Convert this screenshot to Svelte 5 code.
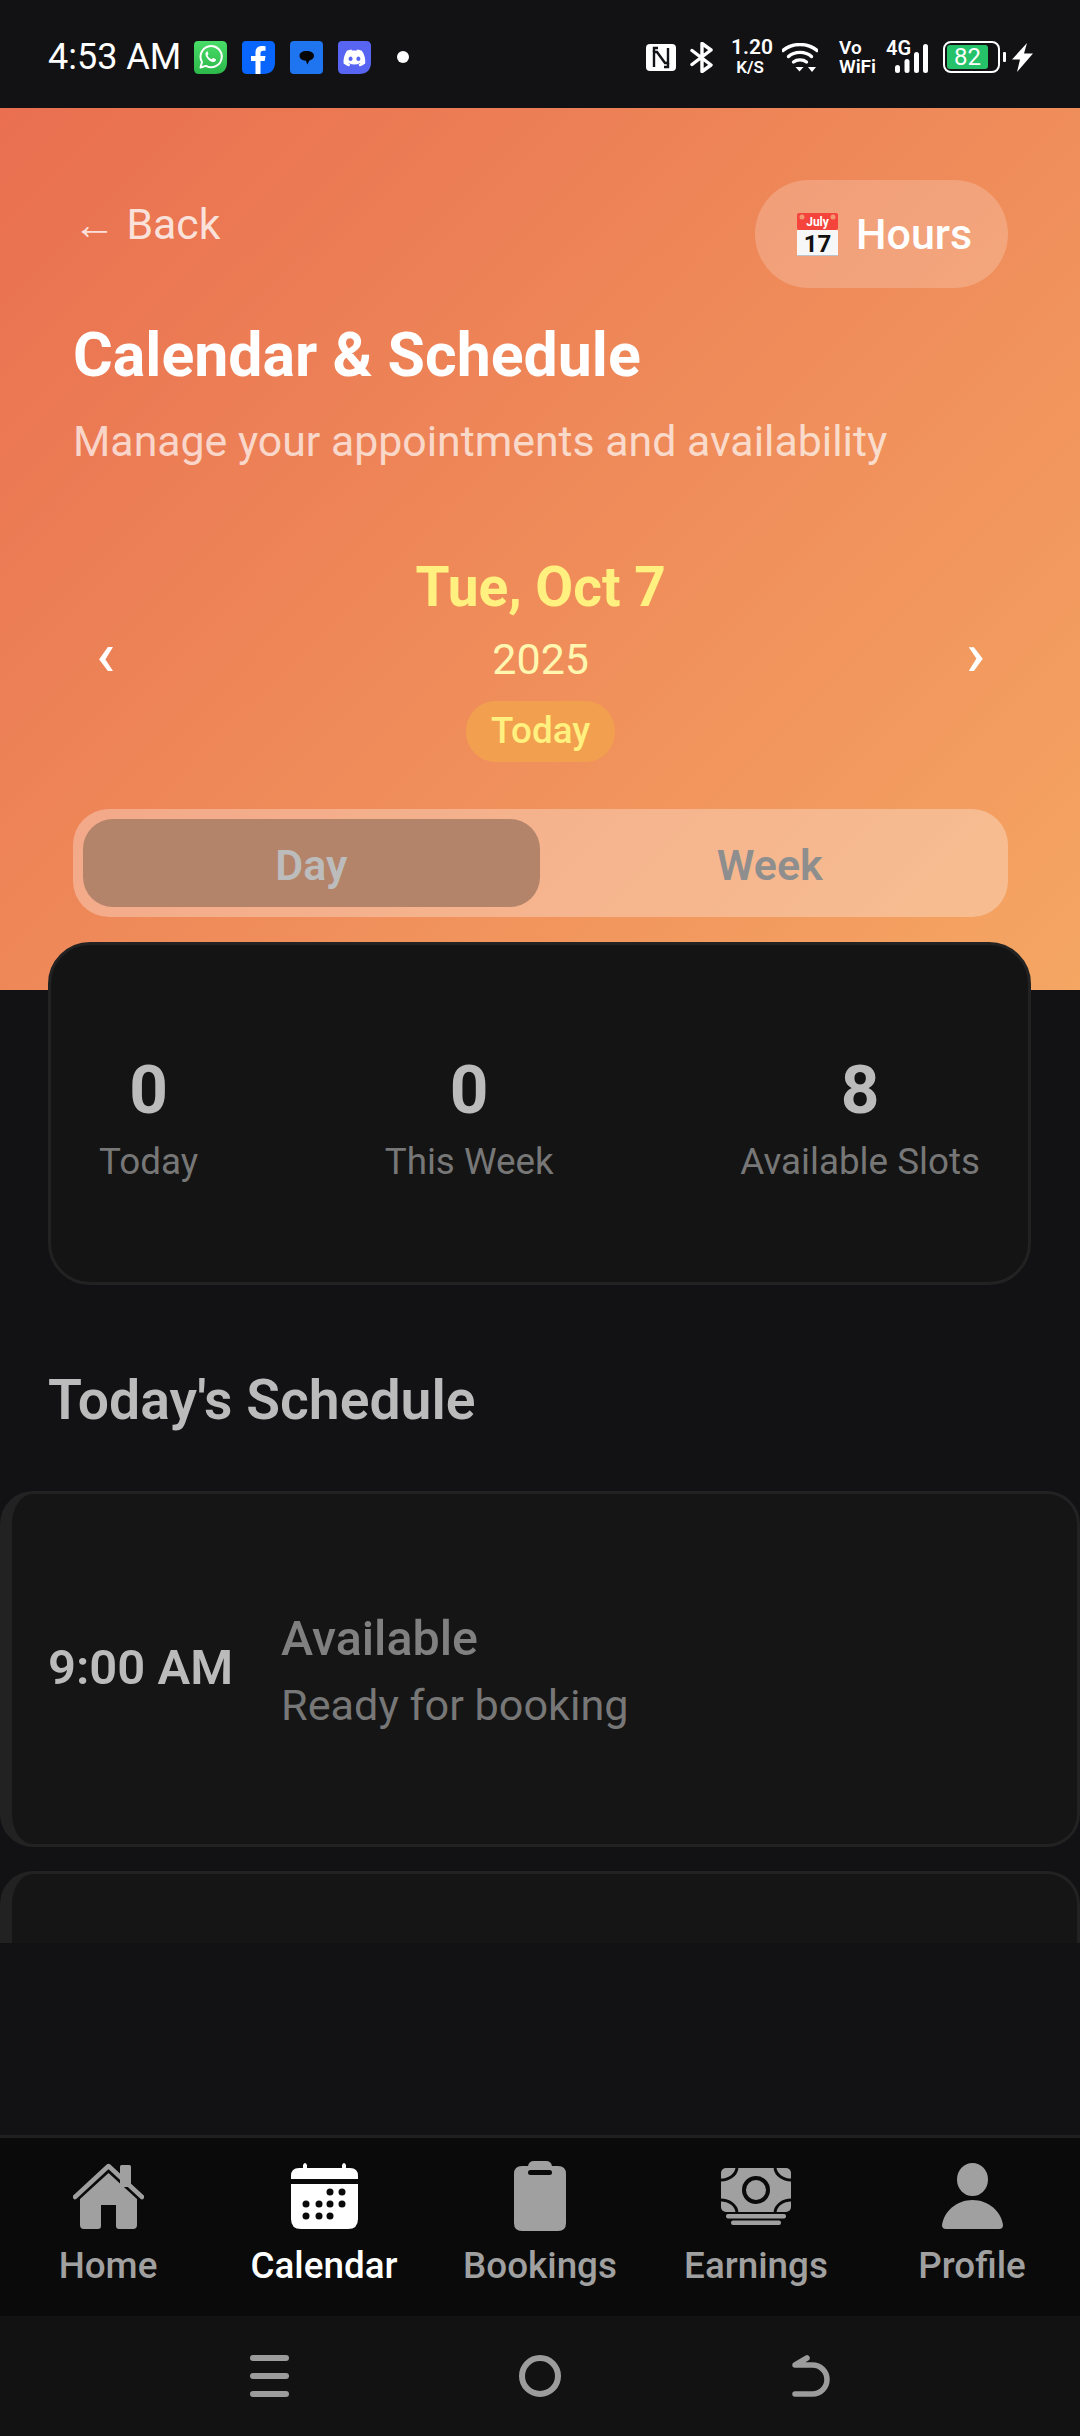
<script>
    const stats = [
        { value: '0', label: 'Today' },
        { value: '0', label: 'This Week' },
        { value: '8', label: 'Available Slots' }
    ];

    const tabs = ['Home', 'Calendar', 'Bookings', 'Earnings', 'Profile'];
    const active = 'Calendar';

    const calendarDots = [
        [39, 29], [51, 29],
        [15, 41], [28, 41], [39, 41], [51, 41],
        [15, 53], [28, 53], [39, 53]
    ];

    const squircle = 'M4 0H28Q33 0 33 5V21Q33 33 21 33H5Q0 33 0 28V4Q0 0 4 0Z';
</script>

<div class="app">
    <div class="status">
        <span class="clock">4:53 AM</span>
        <svg class="app-icon first" viewBox="0 0 33 33">
            <defs>
                <linearGradient id="wa" x1="0" y1="0" x2="0" y2="1">
                    <stop offset="0" stop-color="#49dc68" />
                    <stop offset="1" stop-color="#2cb84a" />
                </linearGradient>
            </defs>
            <path d={squircle} fill="url(#wa)" />
            <path d="M6.5 26.5 8 21a10.6 10.6 0 1 1 4 3.9z" fill="none" stroke="#fff" stroke-width="2" stroke-linejoin="round" />
            <path d="M13 10.5c-1 .3-1.700 1.500-1.500 3 .5 3 3.500 6.700 7 7.500 1.600.3 3-.4 3.400-1.700.2-.7 0-1-.5-1.300l-2-1c-.5-.2-.8 0-1.100.4l-.6.8c-2-.6-3.500-2.200-4.200-4l.7-.8c.3-.4.3-.7.1-1.100l-.8-1.800c-.2-.5-.5-.6-.5-.5z" fill="#fff" />
        </svg>
        <svg class="app-icon" viewBox="0 0 33 33">
            <path d={squircle} fill="#0866ff" />
            <path d="M13.500 33V20H9v-5h4.500v-3.500C13.500 7 16.300 5 20 5c1.300 0 2.500.1 3.500.3v4.400h-2.300c-2 0-2.700 1-2.700 2.600V15h5l-.8 5h-4.200v13z" fill="#fff" />
        </svg>
        <svg class="app-icon" viewBox="0 0 33 33">
            <rect width="33" height="33" rx="4" fill="#1f74f0" />
            <path d="M16.500 10c4.500 0 7.500 1.800 7.500 4.800 0 2.400-2 4.100-4.500 4.700l-2.300 4-1.200-3.700C12 19.500 9.500 17.500 9.500 14.800 9.500 11.800 12.300 10 16.500 10z" fill="#050505" />
        </svg>
        <svg class="app-icon" viewBox="0 0 33 33">
            <path d={squircle} fill="#5865f2" />
            <path d="M23.800 9.800a18 18 0 0 0-4.500-1.400l-.6 1.200a16 16 0 0 0-4.700 0l-.6-1.200a18 18 0 0 0-4.500 1.400C6 14.200 5.200 18.400 5.600 22.600a18 18 0 0 0 5.500 2.800l1.200-1.900-1.900-.9.5-.4a13 13 0 0 0 11 0l.5.4-1.900.9 1.200 1.900a18 18 0 0 0 5.500-2.800c.5-4.900-.8-9.100-3.400-12.800zM12.600 20c-1.100 0-2-1-2-2.300s.9-2.300 2-2.300 2 1 2 2.300-.9 2.300-2 2.300zm7.800 0c-1.100 0-2-1-2-2.300s.9-2.300 2-2.300 2 1 2 2.300-.9 2.300-2 2.300z" fill="#fff" />
        </svg>
        <span class="dot"></span>

        <span class="status-right">
            <svg class="nfc" viewBox="0 0 30 27">
                <rect width="30" height="27" rx="4" fill="#fff" />
                <path d="M8 23V8h3l8 11h3V4" fill="none" stroke="#121316" stroke-width="2.400" />
                <path d="M8 8V4h4M22 19v4h-4" fill="none" stroke="#121316" stroke-width="2.400" />
            </svg>
            <svg class="bt" viewBox="0 0 24 31">
                <path d="M2 8.500 21 23l-9 6.500v-28L21 8 2 22.500" fill="none" stroke="#fff" stroke-width="3.400" stroke-linejoin="round" stroke-linecap="round" />
            </svg>
            <span class="speed"><b>1.20</b><b class="small">K/S</b></span>
            <svg class="wifi" viewBox="0 0 36 29">
                <g fill="none" stroke="#fff" stroke-width="3.400" stroke-linecap="round">
                    <path d="M1 7.500C10 -.5 26 -.5 35 7.500" />
                    <path d="M6.500 13.500C12.500 8 23.500 8 29.500 13.500" />
                    <path d="M11.500 19c3.500-2.800 9.500-2.800 13 0" />
                </g>
                <path d="M13.500 24h8l-4 4.500zM26 24h8l-4 5z" fill="#fff" />
            </svg>
            <span class="vowifi"><b>Vo</b><b>WiFi</b></span>
            <span class="signal">
                <b>4G</b>
                <svg viewBox="0 0 33 29">
                    <rect x="0" y="21" width="5" height="8" rx="2.500" fill="#fff" />
                    <rect x="9.500" y="15" width="5" height="14" rx="2.500" fill="#fff" />
                    <rect x="19" y="8" width="5" height="21" rx="2.500" fill="#fff" />
                    <rect x="28" y="0" width="5" height="29" rx="2.500" fill="#fff" />
                </svg>
            </span>
            <span class="battery"><span class="level">82</span></span>
            <span class="tip"></span>
            <svg class="bolt" viewBox="0 0 21 29">
                <path d="M15 0 0 16.500h8L5 29 21 10.500h-9z" fill="#fff" />
            </svg>
        </span>
    </div>

    <header class="hero">
        <div class="top-row">
            <span class="back">← Back</span>
            <button class="hours">
                <svg viewBox="0 0 41 43">
                    <rect y="0" width="41" height="17" rx="2" fill="#f5443c" />
                    <rect y="17" width="41" height="26" rx="1" fill="#f7f7f7" />
                    <rect y="42" width="41" height="1" fill="#b9c4cc" />
                    <circle cx="5" cy="4" r="2.500" fill="#f09a72" />
                    <circle cx="36" cy="4" r="2.500" fill="#f09a72" />
                    <text x="20.500" y="13" class="month">July</text>
                    <text x="20.500" y="39" class="day-num">17</text>
                </svg>
                Hours
            </button>
        </div>
        <h1>Calendar &amp; Schedule</h1>
        <p class="sub">Manage your appointments and availability</p>

        <div class="date-row">
            <span class="chev">‹</span>
            <div class="date">
                <div class="date-main">Tue, Oct 7</div>
                <div class="year">2025</div>
                <span class="today">Today</span>
            </div>
            <span class="chev">›</span>
        </div>

        <div class="toggle">
            <button class="seg on">Day</button>
            <button class="seg">Week</button>
        </div>
    </header>

    <section class="stats">
        {#each stats as s}
            <div class="stat">
                <div class="value">{s.value}</div>
                <div class="label">{s.label}</div>
            </div>
        {/each}
    </section>

    <h2>Today's Schedule</h2>

    <!-- second card is cut by the scroll area, only its top shows -->
    <div class="slots">
        <div class="slot">
            <div class="time">9:00 AM</div>
            <div class="slot-info">
                <div class="slot-title">Available</div>
                <div class="slot-sub">Ready for booking</div>
            </div>
        </div>
        <div class="slot"></div>
    </div>

    <div class="spacer"></div>

    <nav class="tabs">
        {#each tabs as tab}
            <div class="tab" class:current={tab === active}>
                <div class="tab-icon">
                    {#if tab === 'Home'}
                        <svg width="71" height="66" viewBox="0 0 71 66">
                            <rect x="47" y="2" width="11" height="22" rx="1.500" fill="currentColor" />
                            <path d="M35.500 10 7 36v26q0 4 4 4h14q3 0 3-3V42h15v21q0 3 3 3h14q4 0 4-4V36z" fill="currentColor" />
                            <path d="M2 34 35.500 3 69 34" fill="none" stroke="currentColor" stroke-width="4.500" stroke-linecap="round" stroke-linejoin="round" />
                        </svg>
                    {:else if tab === 'Calendar'}
                        <svg width="67" height="66" viewBox="0 0 67 66">
                            <path d="M0 16v-3q0-8 8-8h4V2q1-2 2-2t2 2v3h35V2q1-2 2-2t2 2v3h4q8 0 8 8v3z" fill="currentColor" />
                            <path d="M0 21h67v35q0 10-10 10H10Q0 66 0 56z" fill="currentColor" />
                            {#each calendarDots as [cx, cy]}
                                <circle {cx} {cy} r="3.500" fill="#0a0a0a" />
                            {/each}
                        </svg>
                    {:else if tab === 'Bookings'}
                        <svg width="52" height="70" viewBox="0 0 52 70">
                            <path d="M14 5q1-5 6-5h12q5 0 6 5h6q8 0 8 8v49q0 8-8 8H8q-8 0-8-8V13q0-8 8-8z" fill="currentColor" />
                            <rect x="14" y="9" width="24" height="5" rx="2.500" fill="#0a0a0a" />
                        </svg>
                    {:else if tab === 'Earnings'}
                        <svg width="70" height="57" viewBox="0 0 70 57">
                            <rect width="70" height="44" rx="5" fill="currentColor" />
                            <circle cx="35" cy="22" r="12" fill="none" stroke="#0a0a0a" stroke-width="4" />
                            <g fill="none" stroke="#0a0a0a" stroke-width="3">
                                <path d="M16 0c-1 7-8 12-16 12" />
                                <path d="M54 0c1 7 8 12 16 12" />
                                <path d="M16 44c-1-7-8-12-16-12" />
                                <path d="M54 44c1-7 8-12 16-12" />
                            </g>
                            <rect x="5" y="46" width="60" height="4.500" rx="2" fill="currentColor" />
                            <rect x="10" y="52.500" width="50" height="4.500" rx="2" fill="currentColor" />
                        </svg>
                    {:else}
                        <svg width="61" height="66" viewBox="0 0 61 66">
                            <ellipse cx="30.500" cy="16.500" rx="15.500" ry="16.500" fill="currentColor" />
                            <path d="M0 62C2 48 15 37 30.500 37S59 48 61 62q0 4-4 4H4q-4 0-4-4z" fill="currentColor" />
                        </svg>
                    {/if}
                </div>
                <div class="tab-label">{tab}</div>
            </div>
        {/each}
    </nav>

    <div class="sysnav">
        <svg width="39" height="42" viewBox="0 0 39 42">
            <g fill="#9c9c9c">
                <rect width="39" height="6" rx="3" />
                <rect y="18" width="39" height="6" rx="3" />
                <rect y="36" width="39" height="6" rx="3" />
            </g>
        </svg>
        <svg width="42" height="42" viewBox="0 0 42 42">
            <circle cx="21" cy="21" r="18" fill="none" stroke="#9c9c9c" stroke-width="6" />
        </svg>
        <svg width="38" height="42" viewBox="0 0 38 42">
            <path d="M3 39H20.500a14.500 14.500 0 0 0 0-29H3L15 3" fill="none" stroke="#9c9c9c" stroke-width="5.500" stroke-linecap="round" stroke-linejoin="round" />
        </svg>
    </div>
</div>

<style>
    :global(body) {
        margin: 0;
        background: #121215;
    }

    .app {
        width: 1080px;
        height: 2436px;
        display: flex;
        flex-direction: column;
        background: #121215;
        font-family: Roboto, "Liberation Sans", sans-serif;
    }

    /* status bar */
    .status {
        height: 108px;
        flex: none;
        display: flex;
        align-items: center;
        padding: 6px 0 0 48px;
        box-sizing: border-box;
        color: #fff;
    }

    .clock {
        font-size: 36px;
        width: 146px;
        white-space: nowrap;
    }

    .app-icon {
        width: 33px;
        height: 33px;
        margin-right: 15px;
    }

    .dot {
        width: 12px;
        height: 12px;
        margin-left: 11px;
        border-radius: 50%;
        background: #fff;
    }

    .status-right {
        margin-left: 237px;
        display: flex;
        align-items: center;
    }

    .status-right b {
        font-weight: 600;
        display: block;
    }

    .nfc {
        width: 30px;
        height: 27px;
        margin-right: 14px;
    }

    .bt {
        width: 24px;
        height: 31px;
        margin-right: 17px;
    }

    .speed {
        width: 38px;
        margin-right: 13px;
        text-align: center;
        font-size: 21px;
        line-height: 20px;
    }

    .speed .small {
        font-size: 17px;
    }

    .wifi {
        width: 36px;
        height: 29px;
        margin-right: 21px;
    }

    .vowifi {
        width: 36px;
        margin-right: 11px;
        font-size: 19px;
        line-height: 19px;
    }

    .signal {
        position: relative;
        width: 42px;
        height: 32px;
        margin-right: 15px;
    }

    .signal b {
        position: absolute;
        left: 0;
        top: -3px;
        font-size: 20px;
        line-height: 20px;
    }

    .signal svg {
        position: absolute;
        right: 0;
        top: 3px;
        width: 33px;
        height: 29px;
    }

    .battery {
        width: 57px;
        height: 32px;
        box-sizing: border-box;
        border: 2px solid #fff;
        border-radius: 8px;
        padding: 2px;
        display: flex;
    }

    .level {
        width: 41px;
        background: #25c26a;
        border-radius: 3px;
        font-size: 24px;
        line-height: 24px;
        text-align: center;
    }

    .tip {
        width: 3px;
        height: 10px;
        margin: 0 6px 0 3px;
        background: #fff;
        border-radius: 1px;
    }

    .bolt {
        width: 21px;
        height: 29px;
    }

    /* page */
    .hero {
        flex: none;
        box-sizing: border-box;
        height: 882px;
        padding: 72px 72px 72px 73px;
        background: linear-gradient(135deg, #e96f50 0%, #f5a663 100%);
    }

    .top-row {
        display: flex;
        justify-content: space-between;
        align-items: flex-start;
    }

    .back {
        margin-top: 19px;
        font-size: 42.8px;
        line-height: 50px;
        color: rgba(255, 255, 255, 0.8);
    }

    .hours {
        height: 108px;
        width: 253px;
        box-sizing: border-box;
        padding: 0 0 0 42px;
        display: flex;
        align-items: center;
        gap: 18px;
        border: none;
        border-radius: 54px;
        background: rgba(255, 255, 255, 0.2);
        color: #fff;
        font: 500 43px Roboto, sans-serif;
    }

    .hours svg {
        width: 41px;
        height: 43px;
    }

    .month {
        font-size: 12px;
        font-weight: 700;
        fill: #fff;
        text-anchor: middle;
    }

    .day-num {
        font-size: 24px;
        font-weight: 700;
        fill: #111;
        text-anchor: middle;
    }

    h1 {
        margin: 33px 0 0;
        font-size: 60.8px;
        line-height: 70px;
        font-weight: 700;
        color: #fff;
    }

    .sub {
        margin: 25px 0 0;
        font-size: 42.8px;
        line-height: 50px;
        color: rgba(255, 255, 255, 0.7);
    }

    .date-row {
        margin-top: 89px;
        padding: 0 23px;
        display: flex;
        justify-content: space-between;
        align-items: center;
    }

    .chev {
        margin-bottom: 10px;
        font-size: 62px;
        line-height: 60px;
        font-weight: 500;
        color: #fff;
    }

    .date {
        display: flex;
        flex-direction: column;
        align-items: center;
    }

    .date-main {
        font-size: 55px;
        line-height: 64px;
        font-weight: 700;
        color: #fff07f;
    }

    .year {
        margin-top: 15px;
        font-size: 43px;
        line-height: 50px;
        color: #fff6b0;
    }

    .today {
        margin-top: 17px;
        height: 61px;
        padding: 0 25px;
        border-radius: 30px;
        background: #f2a04f;
        color: #fff07f;
        font-size: 36.8px;
        font-weight: 500;
        line-height: 60px;
    }

    .toggle {
        margin-top: 47px;
        height: 108px;
        box-sizing: border-box;
        padding: 10px;
        display: grid;
        grid-template-columns: 1fr 1fr;
        gap: 2px;
        border-radius: 36px;
        background: rgba(255, 255, 255, 0.3);
    }

    .seg {
        border: none;
        border-radius: 30px;
        padding: 3px 0 0;
        background: none;
        color: #8e8e8e;
        font: 600 43px Roboto, sans-serif;
    }

    .seg.on {
        background: #b3846a;
        color: #bcbcbc;
    }

    .stats {
        flex: none;
        height: 343px;
        margin: -48px 49px 0 48px;
        position: relative;
        box-sizing: border-box;
        padding: 8px 48px 0;
        display: flex;
        justify-content: space-between;
        align-items: center;
        border: 3px solid #222;
        border-radius: 42px;
        background: #141414;
    }

    .stat {
        text-align: center;
    }

    .value {
        font-size: 67.5px;
        line-height: 78px;
        font-weight: 700;
        color: #bbb;
    }

    .label {
        margin-top: 11px;
        font-size: 36.8px;
        line-height: 44px;
        color: #777;
    }

    h2 {
        flex: none;
        margin: 84px 0 58px 48px;
        font-size: 55.3px;
        line-height: 64px;
        font-weight: 600;
        color: #bbb;
    }

    .slots {
        flex: none;
        height: 452px;
        overflow: hidden;
    }

    .slot {
        height: 356px;
        box-sizing: border-box;
        margin-bottom: 24px;
        padding-left: 36px;
        display: flex;
        align-items: center;
        gap: 48px;
        border: 3px solid #222;
        border-left-width: 12px;
        border-radius: 33px;
        background: #151515;
    }

    .time {
        margin-bottom: 3px;
        font-size: 49px;
        font-weight: 600;
        white-space: nowrap;
        color: #bbb;
    }

    .slot-info {
        padding-top: 3px;
    }

    .slot-title {
        font-size: 48.4px;
        line-height: 56px;
        font-weight: 500;
        color: #808080;
    }

    .slot-sub {
        margin-top: 14px;
        font-size: 43.2px;
        line-height: 50px;
        color: #777;
    }

    .spacer {
        flex: 1;
    }

    /* bottom tabs */
    .tabs {
        height: 181px;
        flex: none;
        box-sizing: border-box;
        display: grid;
        grid-template-columns: repeat(5, 1fr);
        padding-top: 23px;
        border-top: 3px solid #1f1f1f;
        background: #0a0a0a;
    }

    .tab {
        text-align: center;
        color: #a0a0a0;
    }

    .tab.current {
        color: #fff;
    }

    .tab-icon {
        height: 70px;
        display: flex;
        align-items: center;
        justify-content: center;
    }

    .tab-label {
        margin-top: 13px;
        font-size: 36.8px;
        line-height: 44px;
        font-weight: 500;
    }

    .sysnav {
        height: 120px;
        flex: none;
        box-sizing: border-box;
        padding: 0 134px;
        display: grid;
        grid-template-columns: repeat(3, 1fr);
        justify-items: center;
        align-items: center;
        background: #121212;
    }
</style>
